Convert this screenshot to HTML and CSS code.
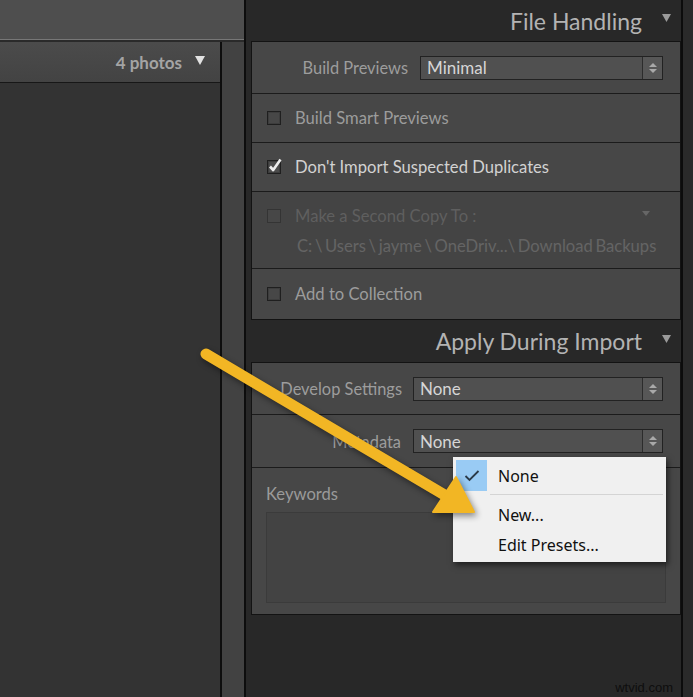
FILE: index.html
```html
<!DOCTYPE html>
<html>
<head>
<meta charset="utf-8">
<link rel="stylesheet" href="styles.css">
</head>
<body>
<div class="app">
  <div class="left">
    <div class="topbar"></div>
    <div class="left-body">
      <div class="grid-area">
        <div class="grid-header">
          <span class="count">4 photos</span>
          <svg class="count-tri" width="10" height="9" viewBox="0 0 10 9"><polygon points="0,0 10,0 5,9" fill="#e2e2e2"/></svg>
        </div>
        <div class="grid-content"></div>
      </div>
      <div class="gutter"></div>
    </div>
  </div>

  <div class="right">
    <div class="panel">
      <div class="panel-header">
        <span class="panel-title">File Handling</span>
        <svg class="panel-tri" width="9" height="8" viewBox="0 0 9 8"><polygon points="0,0 9,0 4.5,8" fill="#9a9a9a"/></svg>
      </div>
      <div class="section">
        <div class="row row-select row-h51">
          <span class="label label-w156">Build Previews</span>
          <div class="select">
            <span class="select-value">Minimal</span>
            <span class="select-arrows"><svg width="10" height="14" viewBox="0 0 10 14"><polygon points="1,6 5,2 9,6" fill="#a9a9a9"/><polygon points="1,8 5,12 9,8" fill="#a9a9a9"/></svg></span>
          </div>
        </div>
        <div class="row row-check row-h48">
          <span class="checkbox"></span>
          <span class="check-text">Build Smart Previews</span>
        </div>
        <div class="row row-check row-h48">
          <span class="checkbox checked">
            <svg class="tick" width="16" height="16" viewBox="0 0 16 16"><path d="M3 8.5 L6.2 12 L13.5 1.5" fill="none" stroke="#ececec" stroke-width="2.6" stroke-linejoin="round"/></svg>
          </span>
          <span class="check-text bright">Don't Import Suspected Duplicates</span>
        </div>
        <div class="row row-copy">
          <div class="copy-line">
            <span class="checkbox dim"></span>
            <span class="check-text disabled">Make a Second Copy To :</span>
            <svg class="copy-tri" width="8" height="5" viewBox="0 0 8 5"><polygon points="0,0 8,0 4,5" fill="#666"/></svg>
          </div>
          <div class="copy-path">C: \ Users \ jayme \ OneDriv...\ Download Backups</div>
        </div>
        <div class="row row-check row-h50">
          <span class="checkbox"></span>
          <span class="check-text">Add to Collection</span>
        </div>
      </div>

      <div class="panel-header header2">
        <span class="panel-title">Apply During Import</span>
        <svg class="panel-tri" width="9" height="8" viewBox="0 0 9 8"><polygon points="0,0 9,0 4.5,8" fill="#9a9a9a"/></svg>
      </div>
      <div class="section">
        <div class="row row-select row-h51">
          <span class="label label-w150">Develop Settings</span>
          <div class="select select-wide">
            <span class="select-value">None</span>
            <span class="select-arrows"><svg width="10" height="14" viewBox="0 0 10 14"><polygon points="1,6 5,2 9,6" fill="#a9a9a9"/><polygon points="1,8 5,12 9,8" fill="#a9a9a9"/></svg></span>
          </div>
        </div>
        <div class="row row-select row-h52">
          <span class="label label-w149">Metadata</span>
          <div class="select select-wide">
            <span class="select-value">None</span>
            <span class="select-arrows"><svg width="10" height="14" viewBox="0 0 10 14"><polygon points="1,6 5,2 9,6" fill="#a9a9a9"/><polygon points="1,8 5,12 9,8" fill="#a9a9a9"/></svg></span>
          </div>
        </div>
        <div class="row row-keywords">
          <div class="kw-label">Keywords</div>
          <div class="kw-box"></div>
        </div>
      </div>
    </div>
    <div class="rail"></div>
  </div>
</div>

<div class="menu">
  <div class="menu-item first">
    <span class="menu-check"><svg width="16" height="12" viewBox="0 0 16 12"><path d="M1.5 6 L5.5 10 L14.5 1" fill="none" stroke="#2b3a48" stroke-width="1.8"/></svg></span>
    <span class="menu-text">None</span>
  </div>
  <div class="menu-sep"></div>
  <div class="menu-item"><span class="menu-check empty"></span><span class="menu-text">New...</span></div>
  <div class="menu-item"><span class="menu-check empty"></span><span class="menu-text">Edit Presets...</span></div>
</div>

<svg class="arrow" width="693" height="697" viewBox="0 0 693 697">
  <g class="arrow-g">
    <line x1="206" y1="354" x2="448" y2="497" stroke="#f2b624" stroke-width="11" stroke-linecap="round"/>
    <polygon points="474,512 433,512 456,477" fill="#f2b624" stroke="#f2b624" stroke-width="2" stroke-linejoin="round"/>
  </g>
</svg>

<div class="watermark">wtvid.com</div>
</body>
</html>
```

FILE: styles.css
```css
html, body {
  margin: 0;
  padding: 0;
  background: #282828;
}
body {
  width: 693px;
  height: 697px;
  overflow: hidden;
  position: relative;
  font-family: "Lato", "Open Sans", sans-serif;
}
.app {
  display: flex;
  width: 693px;
  height: 697px;
}

/* left area */
.left {
  width: 244px;
  border-right: 2px solid #0d0d0d;
  display: flex;
  flex-direction: column;
  flex-shrink: 0;
}
.topbar {
  height: 39px;
  background: #4e4e4e;
  border-bottom: 1px solid #777;
}
.left-body {
  flex: 1;
  display: flex;
  border-top: 2px solid #2a2a2a;
}
.grid-area {
  width: 220px;
  border-right: 2px solid #0e0e0e;
  display: flex;
  flex-direction: column;
}
.grid-header {
  height: 40px;
  background: linear-gradient(#4b4b4b, #434343);
  border-bottom: 1px solid #171717;
  display: flex;
  align-items: center;
  justify-content: flex-end;
  padding-right: 15px;
  gap: 13px;
}
.count {
  color: #a4a4a4;
  font-weight: 700;
  font-size: 17px;
}
.count-tri { margin-top: -4px; }
.grid-content {
  flex: 1;
  background: #333333;
}
.gutter {
  flex: 1;
  background: #424242;
}

/* right */
.right {
  flex: 1;
  display: flex;
}
.panel {
  width: 435px;
  display: flex;
  flex-direction: column;
  background: #282828;
}
.rail {
  flex: 1;
  border-left: 2px solid #0c0c0c;
  background: #2a2a2a;
}
.panel-header {
  height: 41px;
  display: flex;
  align-items: center;
  justify-content: flex-end;
  padding-right: 10px;
  gap: 20px;
}
.header2 { height: 42px; }
.panel-title {
  color: #b3b3b3;
  font-size: 23px;
}
.panel-tri { margin-top: -5px; }

.section {
  margin-left: 5px;
  border: 1px solid #131313;
  background: #474747;
}
.row + .row { border-top: 1px solid #1b1b1b; }
.row-h51 { height: 51px; }
.row-h52 { height: 52px; }
.row-h48 { height: 48px; }
.row-h50 { height: 50px; }

.row-select {
  display: flex;
  align-items: center;
}
.label {
  color: #9d9d9d;
  font-size: 16.4px;
  text-align: right;
  flex-shrink: 0;
}
.label-w156 { width: 156px; margin-right: 12px; }
.label-w150 { width: 150px; margin-right: 11px; }
.label-w149 { width: 149px; margin-right: 12px; }

.select {
  width: 241px;
  height: 22px;
  border: 1px solid #222;
  background: #505050;
  display: flex;
  align-items: center;
}
.select-wide { width: 248px; }
.select-value {
  flex: 1;
  color: #d6d6d6;
  font-size: 17px;
  padding-left: 6px;
}
.select-arrows {
  width: 19px;
  height: 22px;
  border-left: 1px solid #2c2c2c;
  background: #575757;
  display: flex;
  align-items: center;
  justify-content: center;
}

.row-check {
  display: flex;
  align-items: center;
  padding-left: 15px;
}
.checkbox {
  width: 12px;
  height: 12px;
  border: 1px solid #1f1f1f;
  background: #474747;
  box-shadow: inset 0 0 0 1px #3d3d3d;
  margin-right: 14px;
  position: relative;
  flex-shrink: 0;
}
.checkbox.checked { background: #4c4c4c; }
.checkbox.dim { border-color: #343434; box-shadow: none; }
.tick {
  position: absolute;
  left: -1px;
  top: -3px;
}
.check-text {
  color: #9c9c9c;
  font-size: 16.6px;
}
.check-text.bright { color: #d2d2d2; }
.check-text.disabled { color: #5f5f5f; }

.row-copy {
  height: 77px;
  background: #444;
  padding-top: 12px;
  box-sizing: border-box;
}
.copy-line {
  display: flex;
  align-items: center;
  padding-left: 15px;
  height: 24px;
}
.copy-line .check-text { flex: 1; }
.copy-tri { margin-right: 30px; margin-top: -6px; }
.copy-path {
  color: #646464;
  font-size: 16.6px;
  padding-left: 45px;
  margin-top: 6px;
  line-height: 24px;
  word-spacing: -1.6px;
}

.row-keywords {
  height: 147px;
  box-sizing: border-box;
  padding: 16px 14px 0 14px;
}
.kw-label {
  color: #9a9a9a;
  font-size: 16.6px;
  line-height: 20px;
}
.kw-box {
  margin-top: 8px;
  height: 89px;
  border: 1px solid #3b3b3b;
  background: #434343;
}

/* dropdown menu */
.menu {
  position: absolute;
  left: 453px;
  top: 457px;
  width: 207px;
  padding: 3px 3px 2px 3px;
  background: #f0f0f0;
  box-shadow: 2px 3px 6px rgba(0,0,0,0.55);
  font-family: "Noto Sans", "Open Sans", sans-serif;
}
.menu-item {
  height: 30px;
  display: flex;
  align-items: center;
}
.menu-item.first { height: 31px; }
.menu-check {
  width: 31px;
  height: 31px;
  background: #99cbf4;
  display: flex;
  align-items: center;
  justify-content: center;
  flex-shrink: 0;
}
.menu-check.empty { background: transparent; height: 30px; }
.menu-text {
  padding-left: 11px;
  font-size: 16px;
  color: #111;
}
.menu-sep {
  height: 1px;
  background: #d4d4d4;
  margin: 3px 0 5px 34px;
}

/* annotation arrow */
.arrow {
  position: absolute;
  left: 0;
  top: 0;
  pointer-events: none;
}
.arrow-g {
  filter: drop-shadow(2px 3px 3px rgba(0,0,0,0.45));
}

.watermark {
  position: absolute;
  right: 20px;
  bottom: 2px;
  font-family: "Liberation Sans", Arial, sans-serif;
  font-size: 13px;
  color: #0e0e0e;
}
```
